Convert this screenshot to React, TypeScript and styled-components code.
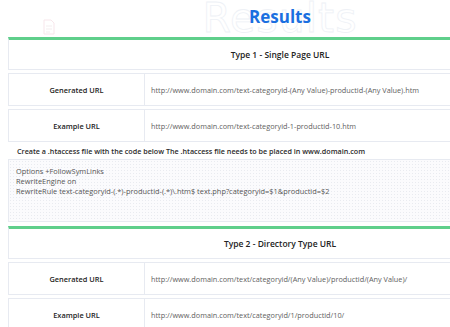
import styled, { createGlobalStyle } from 'styled-components';

// ─── Global ───────────────────────────────────────────────────────────────────

const GlobalStyle = createGlobalStyle`
  html, body {
    margin: 0;
    padding: 0;
    overflow: hidden;
    background: #ffffff;
  }
  body {
    font-family: "Open Sans", "Noto Sans", Arial, sans-serif;
    color: #222;
  }
  * { box-sizing: border-box; }
`;

const colors = {
  green: '#5fcf8b',
  border: '#e7eaf1',
  blue: '#1b6fe0',
  heading: '#232323',
  value: '#616161',
};

// ─── Types ────────────────────────────────────────────────────────────────────

interface UrlRow {
  label: string;
  value: string;
}

interface Section {
  title: string;
  rows: UrlRow[];
  note?: string;
  code?: string[];
}

const sections: Section[] = [
  {
    title: 'Type 1 - Single Page URL',
    rows: [
      {
        label: 'Generated URL',
        value:
          'http://www.domain.com/text-categoryid-(Any Value)-productid-(Any Value).htm',
      },
      {
        label: 'Example URL',
        value: 'http://www.domain.com/text-categoryid-1-productid-10.htm',
      },
    ],
    note:
      'Create a .htaccess file with the code below The .htaccess file needs to be placed in www.domain.com',
    code: [
      'Options +FollowSymLinks',
      'RewriteEngine on',
      'RewriteRule text-categoryid-(.*)-productid-(.*)\\.htm$ text.php?categoryid=$1&productid=$2',
    ],
  },
  {
    title: 'Type 2 - Directory Type URL',
    rows: [
      {
        label: 'Generated URL',
        value:
          'http://www.domain.com/text/categoryid/(Any Value)/productid/(Any Value)/',
      },
      {
        label: 'Example URL',
        value: 'http://www.domain.com/text/categoryid/1/productid/10/',
      },
    ],
  },
];

// ─── Layout ───────────────────────────────────────────────────────────────────

const Page = styled.div`
  width: 552px;
  padding-left: 8px;
`;

const Header = styled.header`
  position: relative;
  height: 37px;
  display: flex;
  align-items: center;
  justify-content: center;
`;

/* faint outlined word behind the title */
const Watermark = styled.span`
  position: absolute;
  left: 50%;
  top: -6px;
  transform: translateX(-50%);
  font-family: "DejaVu Sans", sans-serif;
  font-size: 41px;
  letter-spacing: 1px;
  color: transparent;
  -webkit-text-stroke: 0.8px #eef1f6;
  white-space: nowrap;
  user-select: none;
`;

const DocIcon = styled.svg`
  position: absolute;
  left: 34px;
  top: 19px;
  opacity: 0.55;
`;

const Title = styled.h1`
  position: relative;
  margin: 0;
  padding-bottom: 4px;
  font-family: "Open Sans", sans-serif;
  font-size: 17px;
  font-weight: 700;
  color: ${colors.blue};
`;

const Block = styled.section`
  display: flex;
  flex-direction: column;
  gap: 3px;
  margin-bottom: 4px;
`;

const CardHead = styled.div`
  height: 33px;
  border: 1px solid ${colors.border};
  border-top: 3px solid ${colors.green};
  display: flex;
  align-items: center;
  justify-content: center;
  font-size: 8.5px;
  font-weight: 600;
  color: ${colors.heading};
`;

const Row = styled.div`
  display: grid;
  grid-template-columns: 136px 1fr;
  height: 33px;
  border: 1px solid ${colors.border};
`;

const Label = styled.div`
  display: flex;
  align-items: center;
  justify-content: center;
  border-right: 1px solid ${colors.border};
  font-size: 7.4px;
  font-weight: 600;
  color: ${colors.heading};
`;

const Value = styled.div`
  display: flex;
  align-items: center;
  padding-left: 6px;
  font-size: 7.3px;
  color: ${colors.value};
  white-space: nowrap;
`;

const Note = styled.p`
  margin: 0;
  height: 11px;
  padding-left: 9px;
  display: flex;
  align-items: center;
  font-size: 7.2px;
  font-weight: 600;
  color: #2b2b2b;
  white-space: nowrap;
`;

const Code = styled.pre`
  margin: 0;
  height: 63px;
  padding: 6px 7px 8px;
  border: 1px solid ${colors.border};
  background-color: #fbfbfd;
  background-image: radial-gradient(#e9ebf0 0.7px, transparent 0.8px);
  background-size: 3px 3px;
  font-family: "Open Sans", sans-serif;
  font-size: 7.4px;
  line-height: 10px;
  color: #555;
  white-space: pre;
`;

// ─── App ──────────────────────────────────────────────────────────────────────

export default function App() {
  return (
    <>
      <GlobalStyle />
      <Page>
        <Header>
          <DocIcon width="14" height="17" viewBox="0 0 14 17" fill="none">
            <path d="M2 1h7l3 3v11H2z" stroke="#f1d4dc" strokeWidth="1" />
            <path d="M4 7h6M4 10h6M4 13h4" stroke="#ecdfe4" strokeWidth="1" />
          </DocIcon>
          <Watermark aria-hidden>Results</Watermark>
          <Title>Results</Title>
        </Header>

        {sections.map((s) => (
          <Block key={s.title}>
            <CardHead>{s.title}</CardHead>
            {s.rows.map((r) => (
              <Row key={r.label}>
                <Label>{r.label}</Label>
                <Value>{r.value}</Value>
              </Row>
            ))}
            {s.note && <Note>{s.note}</Note>}
            {s.code && <Code>{s.code.join('\n')}</Code>}
          </Block>
        ))}
      </Page>
    </>
  );
}
